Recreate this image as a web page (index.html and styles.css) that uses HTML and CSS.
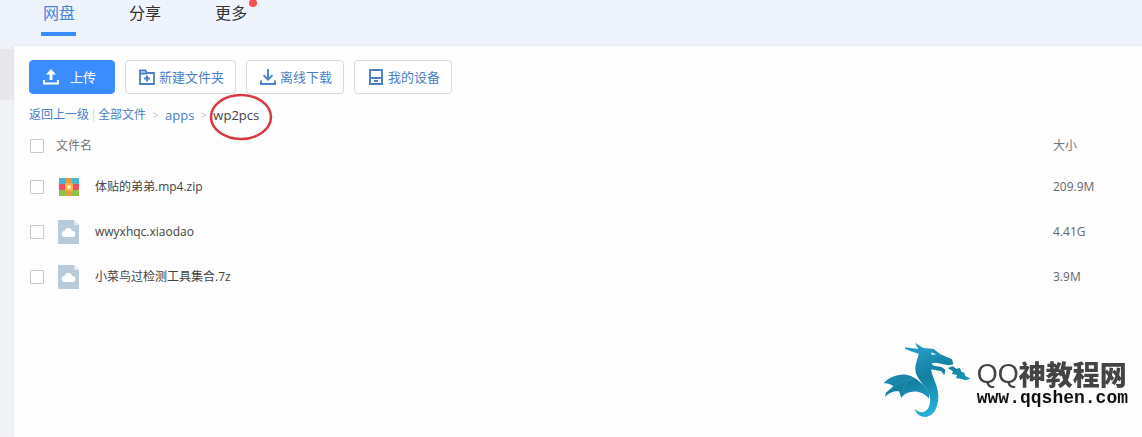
FILE: index.html
```html
<!DOCTYPE html>
<html lang="zh-CN">
<head>
<meta charset="utf-8">
<title>网盘</title>
<link rel="stylesheet" href="styles.css">
</head>
<body>
<nav class="tabs">
  <a class="tab active" href="#">网盘</a>
  <a class="tab" href="#">分享</a>
  <a class="tab" href="#">更多<span class="dot"></span></a>
</nav>
<div class="body">
  <aside class="rail"><div class="rail-item"></div></aside>
  <main class="panel">
    <div class="toolbar">
      <button class="btn primary" type="button">
        <svg class="icon" viewBox="0 0 16 16"><path d="M8 0L13 5.500H9.500V11H6.500V5.500H3Z" fill="currentColor"/><path d="M1 11V14.500H15V11" fill="none" stroke="currentColor" stroke-width="2"/></svg>
        <span>上传</span>
      </button>
      <button class="btn" type="button">
        <svg class="icon" viewBox="0 0 16 16"><path d="M1 15V1.500H6.500L8 4H15V15ZM1 4.500H8" fill="none" stroke="currentColor" stroke-width="1.800"/><path d="M8 6.500V12.500M5 9.500H11" fill="none" stroke="currentColor" stroke-width="2"/></svg>
        <span>新建文件夹</span>
      </button>
      <button class="btn" type="button">
        <svg class="icon" viewBox="0 0 16 16"><path d="M8 0V10.500M3.500 6.200L8 10.700L12.500 6.200M1 11.500V15H15V11.500" fill="none" stroke="currentColor" stroke-width="1.900"/></svg>
        <span>离线下载</span>
      </button>
      <button class="btn" type="button">
        <svg class="icon" viewBox="0 0 16 16"><path d="M2 1H14V15H2ZM2 9H14M6 12H10" fill="none" stroke="currentColor" stroke-width="1.900"/></svg>
        <span>我的设备</span>
      </button>
    </div>
    <div class="crumbs">
      <a href="#">返回上一级</a><span class="bar">|</span><a href="#">全部文件</a><span class="sep">&gt;</span><a class="latin" href="#">apps</a><span class="sep">&gt;</span><span class="current latin">wp2pcs<svg class="ring" viewBox="0 0 64 48"><ellipse cx="32" cy="24" rx="30" ry="22" fill="none" stroke="#d63a40" stroke-width="2.500"/></svg></span>
    </div>
    <table class="files">
      <colgroup>
        <col class="col-check"><col class="col-kind"><col><col class="col-size">
      </colgroup>
      <thead>
        <tr>
          <th><input type="checkbox" aria-label="全选"></th>
          <th colspan="2">文件名</th>
          <th>大小</th>
        </tr>
      </thead>
      <tbody>
        <tr>
          <td><input type="checkbox" id="f1"></td>
          <td><svg class="file-icon" viewBox="0 0 24 24"><path d="M2 3H22V9H2Z" fill="#4db3d6"/><path d="M2 9H22V15H2Z" fill="#ee5260"/><path d="M2 15H22V21H2Z" fill="#8bc34a"/><path d="M9 3H15V21H9Z" fill="#e89a3c"/><rect x="8" y="8" width="8" height="8" rx="1" fill="#f4b545"/><circle cx="12" cy="12" r="2" fill="#fff0c8"/></svg></td>
          <td><label for="f1">体贴的弟弟.mp4.zip</label></td>
          <td class="size">209.9M</td>
        </tr>
        <tr>
          <td><input type="checkbox" id="f2"></td>
          <td><svg class="file-icon" viewBox="0 0 24 24"><path d="M1 0H17L22 5V24H1Z" fill="#b9cad8"/><path d="M17 0V5H22Z" fill="#e1e8ee"/><path d="M8 17a3 3 0 0 1-.500-6a4 4 0 0 1 7.700 0a3 3 0 0 1 .300 6Z" fill="#fff"/></svg></td>
          <td><label for="f2">wwyxhqc.xiaodao</label></td>
          <td class="size">4.41G</td>
        </tr>
        <tr>
          <td><input type="checkbox" id="f3"></td>
          <td><svg class="file-icon" viewBox="0 0 24 24"><path d="M1 0H17L22 5V24H1Z" fill="#b9cad8"/><path d="M17 0V5H22Z" fill="#e1e8ee"/><path d="M8 17a3 3 0 0 1-.500-6a4 4 0 0 1 7.700 0a3 3 0 0 1 .300 6Z" fill="#fff"/></svg></td>
          <td><label for="f3">小菜鸟过检测工具集合.7z</label></td>
          <td class="size">3.9M</td>
        </tr>
      </tbody>
    </table>
  </main>
</div>
<div class="watermark">
  <svg class="dragon" viewBox="0 0 276 240">
    <defs><linearGradient id="sea" gradientUnits="userSpaceOnUse" x1="60" y1="10" x2="150" y2="235"><stop offset="0" stop-color="#2aa5d4"/><stop offset="0.500" stop-color="#147fa0"/><stop offset="1" stop-color="#27b5e0"/></linearGradient></defs>
    <g fill="url(#sea)">
      <path d="M72 22L112 27L102 8L127 24L158 27L177 42L213 58L217 73L202 76L184 72L164 68L151 70L158 77L181 81L193 89L190 106L181 94L151 88C150 108 174 137 172 174C170 203 160 226 135 231C119 232 106 222 101 207C115 220 134 220 142 204C151 187 149 169 140 153C126 130 103 112 103 88C103 67 112 53 113 41L94 35L72 27Z"/>
      <path d="M8 130C25 109 64 96 91 109C114 120 131 137 144 158L144 176C129 157 105 151 90 156C77 158 69 162 61 174L54 154C38 151 22 160 12 171L15 158L37 139C28 131 18 129 8 130Z"/>
      <path d="M200 84L215 79L226 86L237 84L241 95L250 98L253 108L269 116L253 121L241 117L225 114L228 105L213 102L216 94Z"/>
    </g>
    <path d="M150 37L166 43L153 45Z" fill="#fff" opacity="0.900"/>
    <path d="M96 113L72 131L61 161M96 113L52 130L37 140" fill="none" stroke="#3f9fbd" stroke-width="1.500"/>
  </svg>
  <div class="brand">
    <div class="brand-name"><span class="qq">QQ</span>神教程网</div>
    <div class="brand-url">www.qqshen.com</div>
  </div>
</div>
</body>
</html>
```
FILE: styles.css
```css
* { box-sizing: border-box; }
body {
  margin: 0;
  min-height: 100vh;
  display: flex;
  flex-direction: column;
  background: #eff3fb;
  color: #444;
  font: 12px/18px "Open Sans", "Noto Sans CJK SC", sans-serif;
}
a { color: #4a80c8; text-decoration: none; }
.tabs {
  display: flex;
  gap: 51px;
  height: 46px;
  padding: 0 41px;
}
.tab {
  position: relative;
  height: 36px;
  padding: 1px 1px 0 2px;
  border-bottom: 4px solid transparent;
  border-radius: 1px;
  color: #333;
  font-size: 16px;
  line-height: 24px;
}
.tab.active { color: #4a86d8; border-bottom-color: #3b8cff; }
.dot {
  position: absolute;
  top: -1px;
  right: -9px;
  width: 8px;
  height: 8px;
  border-radius: 50%;
  background: #f4524d;
}
.body { flex: 1; display: flex; }
.rail { width: 14px; padding-top: 3px; background: #f1f3f8; }
.rail-item { height: 51px; background: #e8e8ea; }
.panel {
  flex: 1;
  padding: 14px 0 0 15px;
  background: #fdfdfd;
  box-shadow: 0 0 3px #d9dfea;
}
.toolbar { display: flex; gap: 10px; }
.btn {
  display: flex;
  align-items: center;
  gap: 4px;
  height: 34px;
  padding: 0 11px 0 13px;
  border: 1px solid #d5dae3;
  border-radius: 4px;
  background: #fff;
  color: #4a80c8;
  font: inherit;
  font-size: 13px;
}
.btn.primary {
  gap: 11px;
  padding: 0 18px 0 13px;
  border-color: #3b8cff;
  background: #3b8cff;
  color: #fff;
}
.icon { width: 16px; height: 16px; }
.crumbs { display: flex; height: 34px; padding-top: 12px; }
.bar { width: 9px; text-align: center; color: #c4d4ea; }
.sep { width: 19px; text-align: center; color: #c4c8ce; font-size: 10px; }
.latin { font-size: 13px; }
.current { position: relative; }
.ring {
  position: absolute;
  top: -13px;
  left: -4px;
  width: 64px;
  height: 48px;
}
.files { width: 100%; table-layout: fixed; border-collapse: collapse; }
.files th, .files td { height: 45px; padding: 0; text-align: left; vertical-align: middle; font-weight: 400; }
.files th { height: 36px; color: #777; }
.col-check { width: 27px; }
.col-kind { width: 39px; }
.col-size { width: 89px; }
.files .size { color: #666; }
.files input {
  display: block;
  appearance: none;
  width: 14px;
  height: 14px;
  margin: 0 1px;
  border: 1px solid #c8c8c8;
  border-radius: 1px;
  background: #fff;
}
.file-icon { display: block; width: 24px; height: 24px; margin-left: 1px; }
.watermark {
  position: fixed;
  right: 14px;
  bottom: 17px;
  display: flex;
  align-items: center;
  gap: 4px;
}
.dragon { width: 92px; height: 80px; }
.brand { white-space: nowrap; }
.brand-name { display: flex; padding-top: 6px; color: #444; font: 900 27px/30px "Noto Sans CJK SC", sans-serif; }
.qq { font-family: "Liberation Sans", sans-serif; font-weight: 400; }
.brand-url { color: #111; font: 700 18px/18px "Liberation Mono", monospace; }
```
